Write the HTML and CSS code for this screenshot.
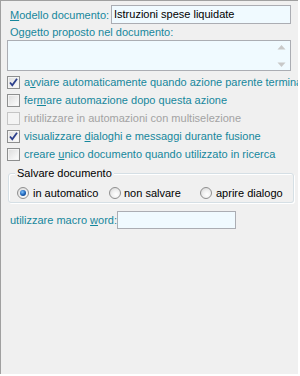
FILE: index.html
```html
<!DOCTYPE html>
<html>
<head>
<meta charset="utf-8">
<link rel="stylesheet" href="styles.css">
</head>
<body>
<div class="panel">
  <div class="row row-model">
    <span class="lbl"><u>M</u>odello documento:</span>
    <div class="input input-model">Istruzioni spese liquidate</div>
  </div>
  <div class="lbl lbl-obj">Oggetto proposto nel documento:</div>
  <div class="textarea">
    <div class="sbar">
      <svg width="9" height="6" viewBox="0 0 9 6"><path d="M0.5 5.5 L4.5 1 L8.5 5.5 Z" fill="#c8c8c8"/></svg>
      <svg width="9" height="6" viewBox="0 0 9 6"><path d="M0.5 0.5 L4.5 5 L8.5 0.5 Z" fill="#c8c8c8"/></svg>
    </div>
  </div>
  <div class="checks">
    <div class="chk"><span class="box checked"><svg width="11" height="11" viewBox="0 0 11 11"><path d="M2 5.5 L4.3 8.3 L9 1.8" fill="none" stroke="#2c3f8c" stroke-width="1.8"/></svg></span><span class="lbl">a<u>v</u>viare automaticamente quando azione parente termina</span></div>
    <div class="chk"><span class="box"></span><span class="lbl">fer<u>m</u>are automazione dopo questa azione</span></div>
    <div class="chk"><span class="box disabled"></span><span class="lbl dis">riutilizzare in automazioni con multiselezione</span></div>
    <div class="chk"><span class="box checked"><svg width="11" height="11" viewBox="0 0 11 11"><path d="M2 5.5 L4.3 8.3 L9 1.8" fill="none" stroke="#2c3f8c" stroke-width="1.8"/></svg></span><span class="lbl">visualizzare <u>d</u>ialoghi e messaggi durante fusione</span></div>
    <div class="chk"><span class="box"></span><span class="lbl">creare <u>u</u>nico documento quando utilizzato in ricerca</span></div>
  </div>
  <div class="group">
    <span class="legend">Salvare documento</span>
    <div class="radios">
      <div class="rad r1"><span class="dot on"></span><span>in automatico</span></div>
      <div class="rad r2"><span class="dot"></span><span>non salvare</span></div>
      <div class="rad r3"><span class="dot"></span><span>aprire dialogo</span></div>
    </div>
  </div>
  <div class="row row-macro">
    <span class="lbl">utilizzare macro <u>w</u>ord:</span>
    <div class="input input-macro"></div>
  </div>
</div>
</body>
</html>
```

FILE: styles.css
```css
html, body {
  margin: 0;
  padding: 0;
  background: #ffffff;
}
body {
  width: 300px;
  height: 376px;
  overflow: hidden;
  font-family: "Liberation Sans", Arial, sans-serif;
  font-size: 11px;
  color: #000;
}
.panel {
  box-sizing: border-box;
  width: 298px;
  height: 374px;
  background: #f0f0f0;
  border-top: 1px solid #a0a0a0;
  border-left: 1px solid #a0a0a0;
  padding: 4px 0 0 6px;
  overflow: hidden;
}
u {
  text-decoration: underline;
  text-underline-offset: 1px;
}
.lbl {
  color: #16879c;
  white-space: nowrap;
}
.lbl.dis {
  color: #a3a3a3;
}
.row {
  display: flex;
  align-items: center;
}
.row-model .lbl {
  padding-left: 3px;
  width: 101px;
}
.input {
  box-sizing: border-box;
  height: 19px;
  border: 1px solid #abadb3;
  background: #f0faff;
  padding: 2px 0 0 2px;
  line-height: 13px;
  color: #000;
}
.input-model {
  width: 180px;
}
.lbl-obj {
  display: block;
  margin: 2px 0 0 3px;
  height: 13px;
  line-height: 13px;
}
.textarea {
  box-sizing: border-box;
  margin-top: 1px;
  width: 284px;
  height: 31px;
  border: 1px solid #abadb3;
  background: #f0faff;
  display: flex;
  justify-content: flex-end;
}
.sbar {
  width: 17px;
  display: flex;
  flex-direction: column;
  justify-content: space-between;
  align-items: center;
  padding: 3px 0 2px;
}
.checks {
  margin-top: 2px;
  display: flex;
  flex-direction: column;
}
.chk {
  display: flex;
  align-items: center;
  height: 18px;
  gap: 4px;
}
.box {
  box-sizing: border-box;
  flex: none;
  width: 13px;
  height: 13px;
  border: 1px solid #8e8f8f;
  background: linear-gradient(135deg, #dcdcdc 0%, #f4f4f4 70%, #ffffff 100%);
  box-shadow: inset 0 0 0 1px #f4f4f4;
  display: flex;
  align-items: center;
  justify-content: center;
}
.box.disabled {
  border-color: #c5c5c5;
  background: #f4f4f4;
  box-shadow: none;
}
.group {
  position: relative;
  box-sizing: border-box;
  margin-top: 10px;
  margin-left: 1px;
  width: 286px;
  height: 30px;
  border: 1px solid #d5dfe5;
  border-radius: 3px;
  box-shadow: inset 1px 1px 0 #ffffff, 1px 1px 0 #ffffff;
}
.legend {
  position: absolute;
  left: 6px;
  top: -8px;
  padding: 0 2px;
  background: #f0f0f0;
  line-height: 14px;
  color: #000;
}
.radios {
  display: flex;
  align-items: center;
  height: 100%;
  padding-top: 9px;
  box-sizing: border-box;
}
.rad {
  display: flex;
  align-items: center;
  gap: 4px;
  color: #000;
  white-space: nowrap;
}
.r1 { margin-left: 8px; width: 92px; }
.r2 { width: 91px; gap: 3px; }
.r3 { gap: 4px; }
.dot {
  box-sizing: border-box;
  flex: none;
  width: 12px;
  height: 12px;
  border-radius: 50%;
  border: 1px solid #8f8f8f;
  background: radial-gradient(circle at 60% 65%, #ffffff 0%, #f0f0f0 45%, #cfcfcf 100%);
  display: flex;
  align-items: center;
  justify-content: center;
}
.dot.on::after {
  content: "";
  width: 6px;
  height: 6px;
  border-radius: 50%;
  background: radial-gradient(circle at 40% 35%, #7fc3ff 0%, #1a5fb4 55%, #0b3470 100%);
}
.row-macro {
  margin-top: 8px;
}
.row-macro .lbl {
  padding-left: 3px;
  width: 107px;
}
.input-macro {
  width: 119px;
  height: 18px;
}
```
